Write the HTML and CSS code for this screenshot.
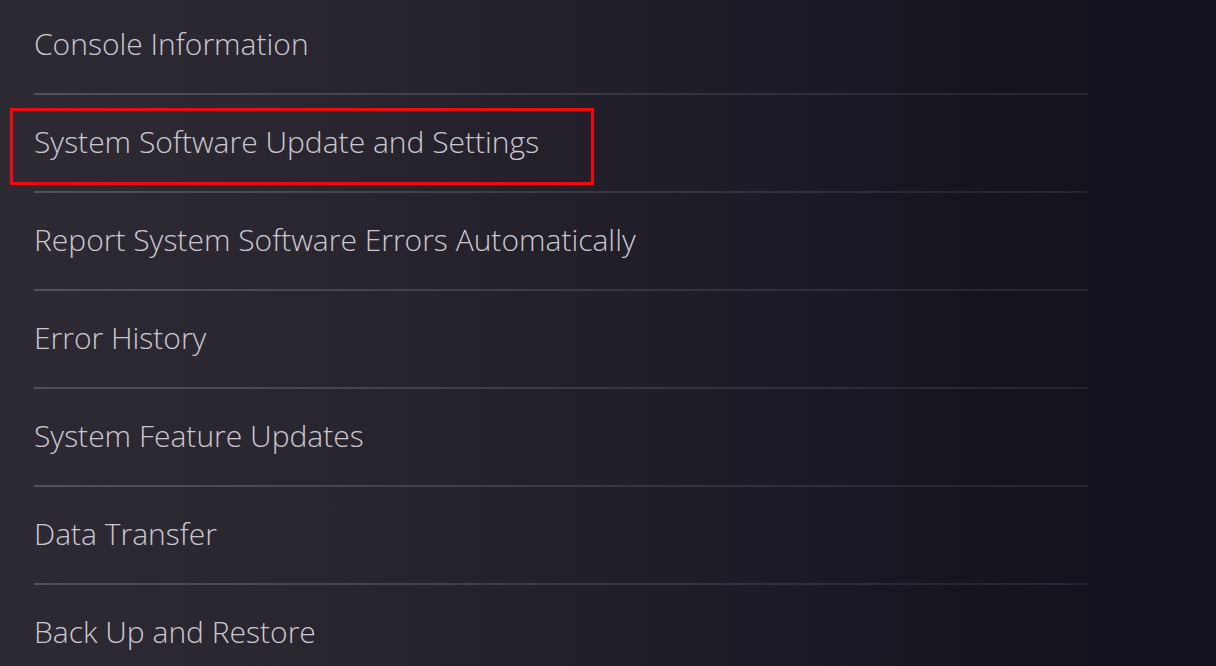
FILE: index.html
```html
<!DOCTYPE html>
<html lang="en">
<head>
<meta charset="utf-8">
<title>System</title>
<link rel="stylesheet" href="styles.css">
</head>
<body>
<main class="screen">
  <ul class="menu">
    <li class="item"><span class="label">Console Information</span></li>
    <li class="item item--marked"><span class="label">System Software Update and Settings</span><span class="highlight"></span></li>
    <li class="item"><span class="label">Report System Software Errors Automatically</span></li>
    <li class="item"><span class="label">Error History</span></li>
    <li class="item"><span class="label">System Feature Updates</span></li>
    <li class="item"><span class="label">Data Transfer</span></li>
    <li class="item"><span class="label">Back Up and Restore</span></li>
  </ul>
</main>
</body>
</html>
```

FILE: styles.css
```css
html, body {
  margin: 0;
  padding: 0;
  height: 100%;
  overflow: hidden;
}

body {
  font-family: "Open Sans", "Noto Sans", sans-serif;
  background: linear-gradient(90deg, #2e2a34 0%, #2a2630 25%, #221f2a 48%, #1c1a26 65%, #15141f 80%, #12111d 100%);
}

.screen {
  width: 1216px;
  height: 666px;
  overflow: hidden;
}

.menu {
  list-style: none;
  margin: -3px 0 0 0;
  padding: 0 128px 0 34px;
  width: 1054px;
}

.item {
  position: relative;
  height: 96px;
  display: flex;
  align-items: center;
  border-bottom: 2px solid transparent;
  border-image: linear-gradient(90deg, rgba(125,118,132,0.5), rgba(110,105,120,0.32) 55%, rgba(90,88,105,0.25)) 1;
}

.label {
  font-size: 30px;
  font-weight: 300;
  color: #cbc8d0;
  letter-spacing: 0;
  line-height: 1;
  margin-top: -3px;
}

.highlight {
  position: absolute;
  left: -24px;
  top: 13px;
  width: 578px;
  height: 71px;
  border: 3px solid #f00a0f;
}
```
